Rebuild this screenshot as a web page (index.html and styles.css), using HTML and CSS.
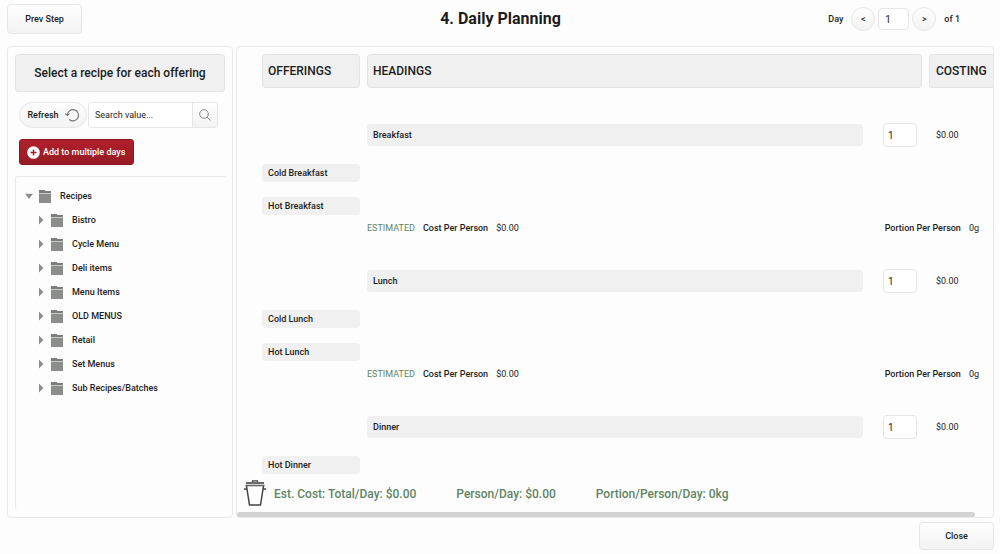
FILE: index.html
```html
<!DOCTYPE html>
<html lang="en">
<head>
  <meta charset="UTF-8">
  <title>Daily Planning</title>
  <link rel="stylesheet" href="styles.css">
</head>
<body>

<svg class="sprite" aria-hidden="true">
  <symbol id="folder" viewBox="0 0 12 13">
    <path d="M0 0h6v1h6v2H0z" fill="#7b7d7b"/>
    <path d="M0 3h12v1H0z" fill="#c9cac9"/>
    <path d="M0 4h12v9H0z" fill="#8b8d8b"/>
  </symbol>
</svg>

<header class="header">
  <div><button class="btn">Prev Step</button></div>
  <h1>4. Daily Planning</h1>
  <div class="pager">
    <label for="day">Day</label>
    <button class="round" aria-label="Previous day">&lt;</button>
    <input id="day" class="day-input" type="text" value="1">
    <button class="round" aria-label="Next day">&gt;</button>
    <span class="of">of 1</span>
  </div>
</header>

<main class="main">
  <aside class="panel sidebar">
    <h2 class="side-title">Select a recipe for each offering</h2>
    <div class="tools">
      <button class="refresh">Refresh
        <svg width="14" height="14" viewBox="0 0 14 14" fill="none" stroke="#777" stroke-width="1.2">
          <path d="M4.2 11.5A5.6 5.6 0 1 0 2.3 7"/>
          <path d="M.3 5.4l2 2 2.2-1.8"/>
        </svg>
      </button>
      <form class="search">
        <input type="text" placeholder="Search value..." aria-label="Search value">
        <button type="button" aria-label="Search">
          <svg width="12" height="12" viewBox="0 0 12 12" fill="none" stroke="#888">
            <circle cx="5" cy="5" r="4.3"/>
            <path d="M8 8l3.5 3.5"/>
          </svg>
        </button>
      </form>
    </div>
    <button class="add">
      <svg width="13" height="13" viewBox="0 0 13 13">
        <circle cx="6.5" cy="6.5" r="6.3" fill="#fff"/>
        <path d="M6.5 3.5v6M3.5 6.5h6" stroke="#a31c26" stroke-width="1.4"/>
      </svg>
      Add to multiple days
    </button>
    <div class="tree">
      <ul>
        <li><div class="node"><button class="toggle open" aria-label="Collapse"></button><svg class="folder"><use href="#folder"/></svg>Recipes</div>
          <ul>
            <li class="node"><button class="toggle" aria-label="Expand"></button><svg class="folder"><use href="#folder"/></svg>Bistro</li>
            <li class="node"><button class="toggle" aria-label="Expand"></button><svg class="folder"><use href="#folder"/></svg>Cycle Menu</li>
            <li class="node"><button class="toggle" aria-label="Expand"></button><svg class="folder"><use href="#folder"/></svg>Deli items</li>
            <li class="node"><button class="toggle" aria-label="Expand"></button><svg class="folder"><use href="#folder"/></svg>Menu Items</li>
            <li class="node"><button class="toggle" aria-label="Expand"></button><svg class="folder"><use href="#folder"/></svg>OLD MENUS</li>
            <li class="node"><button class="toggle" aria-label="Expand"></button><svg class="folder"><use href="#folder"/></svg>Retail</li>
            <li class="node"><button class="toggle" aria-label="Expand"></button><svg class="folder"><use href="#folder"/></svg>Set Menus</li>
            <li class="node"><button class="toggle" aria-label="Expand"></button><svg class="folder"><use href="#folder"/></svg>Sub Recipes/Batches</li>
          </ul>
        </li>
      </ul>
    </div>
  </aside>

  <section class="panel planner">
    <div class="plan">
      <div class="cols heads">
        <h3>OFFERINGS</h3>
        <h3>HEADINGS</h3>
        <h3 class="last">COSTING</h3>
      </div>

      <div class="meal">
        <div class="cols">
          <div class="heading">
            <label class="bar" for="breakfast">Breakfast</label>
            <input id="breakfast" type="text" value="1">
          </div>
          <span class="cost">$0.00</span>
        </div>
        <div class="offers">
          <div class="offer">Cold Breakfast</div>
          <div class="offer">Hot Breakfast</div>
        </div>
        <div class="estimate">
          <span class="green">ESTIMATED</span><b>Cost Per Person</b><span>$0.00</span>
          <b class="portion">Portion Per Person</b><span>0g</span>
        </div>
      </div>

      <div class="meal">
        <div class="cols">
          <div class="heading">
            <label class="bar" for="lunch">Lunch</label>
            <input id="lunch" type="text" value="1">
          </div>
          <span class="cost">$0.00</span>
        </div>
        <div class="offers">
          <div class="offer">Cold Lunch</div>
          <div class="offer">Hot Lunch</div>
        </div>
        <div class="estimate">
          <span class="green">ESTIMATED</span><b>Cost Per Person</b><span>$0.00</span>
          <b class="portion">Portion Per Person</b><span>0g</span>
        </div>
      </div>

      <div class="meal">
        <div class="cols">
          <div class="heading">
            <label class="bar" for="dinner">Dinner</label>
            <input id="dinner" type="text" value="1">
          </div>
          <span class="cost">$0.00</span>
        </div>
        <div class="offers">
          <div class="offer">Hot Dinner</div>
        </div>
      </div>
    </div>

    <div class="totals">
      <svg width="22" height="28" viewBox="0 0 22 28" fill="none" stroke="#444" stroke-width="1.3">
        <path d="M8.5 2V.8h5V2"/>
        <path d="M2 3h18" stroke-width="1.6"/>
        <path d="M1.5 5.5h19" stroke="#666" stroke-width="1.6"/>
        <path d="M2.5 6L5.5 25h11l3-19M0 9h3M19 9h3" stroke-width="1.5"/>
      </svg>
      <span>Est. Cost: Total/Day: $0.00</span>
      <span>Person/Day: $0.00</span>
      <span>Portion/Person/Day: 0kg</span>
    </div>
    <div class="scrollbar"></div>
  </section>
</main>

<footer class="footer">
  <button class="btn">Close</button>
</footer>

</body>
</html>
```
FILE: styles.css
```css
* {
  box-sizing: border-box;
}
body {
  margin: 0;
  padding: 0 6px 0 7px;
  height: 100vh;
  display: flex;
  flex-direction: column;
  overflow: hidden;
  background: #fdfdfd;
  color: #1c1c1c;
  font: 500 9px/14px Roboto, sans-serif;
}
h1, h2, h3, ul {
  margin: 0;
  padding: 0;
}
button, input {
  font: inherit;
  color: inherit;
  margin: 0;
}
button {
  cursor: pointer;
  padding: 0;
}
b {
  font-weight: 500;
}
svg {
  flex: none;
}
.sprite {
  display: none;
}
.btn, .round, .refresh {
  border: 1px solid #e6e6e6;
  background: linear-gradient(#fefefe, #f3f3f3);
}
.btn {
  width: 75px;
  height: 30px;
  border-radius: 4px;
}

/* top bar */
.header {
  height: 46px;
  padding: 4px 0;
  display: grid;
  grid-template-columns: 1fr auto 1fr;
}
.header h1 {
  font-size: 16px;
  line-height: 30px;
  font-weight: 700;
}
.pager {
  display: flex;
  justify-content: flex-end;
  align-items: center;
  height: 30px;
  gap: 3px;
  padding-right: 34px;
}
.pager label {
  margin-right: 5px;
}
.round {
  width: 24px;
  height: 24px;
  border-radius: 50%;
}
.day-input {
  width: 31px;
  height: 22px;
  padding: 0 6px;
}
.of {
  margin-left: 5px;
}
.day-input, .heading input {
  border: 1px solid #e6e6e6;
  border-radius: 4px;
  background: #fff;
  font-size: 10px;
  font-weight: 400;
}

/* panels */
.main {
  flex: 1;
  min-height: 0;
  display: flex;
  gap: 3px;
}
.panel {
  border: 1px solid #e9e9e9;
  border-radius: 4px;
  display: flex;
  flex-direction: column;
}
.sidebar {
  width: 226px;
  padding: 7px;
  align-items: flex-start;
}
.side-title, .heads h3 {
  border: 1px solid #e3e3e3;
  border-radius: 4px;
  background: #f0f0f0;
  font-size: 12px;
  font-weight: 500;
}
.side-title {
  width: 100%;
  line-height: 36px;
  text-align: center;
}
.tools {
  display: flex;
  gap: 1px;
  padding: 10px 4px 11px;
}
.refresh {
  width: 68px;
  height: 26px;
  border-radius: 13px;
  display: flex;
  align-items: center;
  justify-content: center;
  gap: 6px;
}
.search {
  width: 130px;
  height: 26px;
  display: flex;
  border: 1px solid #e6e6e6;
  border-radius: 3px;
  overflow: hidden;
}
.search input {
  flex: 1;
  min-width: 0;
  border: 0;
  padding: 0 6px;
  font-weight: 400;
  background: #fff;
}
.search input::placeholder {
  color: #222;
}
.search button {
  width: 25px;
  display: grid;
  place-items: center;
  border: 0;
  border-left: 1px solid #e6e6e6;
  background: linear-gradient(#fefefe, #f3f3f3);
}
.add {
  margin-left: 4px;
  height: 26px;
  padding: 0 8px 0 7px;
  display: flex;
  align-items: center;
  gap: 3px;
  color: #fff;
  border: 1px solid #8f1820;
  border-radius: 3px;
  background: linear-gradient(#b0202c, #961b24);
}
.tree {
  flex: 1;
  width: 100%;
  margin-top: 11px;
  padding: 7px 9px;
  border: 1px solid #e9e9e9;
  border-width: 1px 0 0 1px;
  border-radius: 3px 0 0 3px;
}
.tree ul {
  list-style: none;
}
.tree ul ul {
  padding-left: 12px;
}
.node {
  display: flex;
  align-items: center;
  height: 24px;
}
.toggle {
  width: 8px;
  height: 9px;
  border: 0;
  background: #8b8d8b;
  clip-path: polygon(25% 0, 80% 50%, 25% 100%);
}
.toggle.open {
  clip-path: polygon(0 25%, 100% 25%, 50% 80%);
}
.folder {
  width: 12px;
  height: 13px;
  margin: 0 9px 0 6px;
}

/* planner */
.planner {
  flex: 1;
  min-width: 0;
}
.plan {
  flex: 1;
  min-height: 0;
  padding: 7px 0 0 25px;
  overflow: hidden;
}
.cols {
  display: grid;
  grid-template-columns: 98px 1fr 64px;
  gap: 7px;
  align-items: center;
}
.heads h3 {
  padding: 0 5px;
  line-height: 32px;
}
.heads .last {
  padding-left: 6px;
  border-right: 0;
  border-radius: 4px 0 0 4px;
}
.meal {
  padding-top: 35px;
}
.meal + .meal {
  padding-top: 34px;
}
.heading {
  grid-column: 2;
  display: flex;
  align-items: center;
  gap: 20px;
  padding-right: 5px;
}
.bar {
  flex: 1;
  padding: 0 6px;
  line-height: 22px;
  border-radius: 4px;
  background: #f0f0f0;
}
.heading input {
  width: 34px;
  height: 24px;
  padding: 0 4px;
}
.cost {
  padding-left: 7px;
  font-weight: 400;
}
.offers {
  width: 98px;
  padding-top: 17px;
  display: grid;
  gap: 15px;
}
.offer {
  padding: 0 6px;
  line-height: 18px;
  border-radius: 4px;
  background: #f0f0f0;
}
.estimate {
  display: flex;
  gap: 8px;
  margin: 6px 14px 0 105px;
}
.estimate span {
  font-weight: 400;
}
.green, .totals {
  color: #5f8465;
}
.portion {
  margin-left: auto;
}
.totals {
  height: 38px;
  padding: 2px 0 0 7px;
  display: flex;
  align-items: center;
  font-size: 12px;
}
.totals span {
  margin: 0 32px 0 8px;
}
.scrollbar {
  height: 5px;
  margin-right: 18px;
  border-radius: 3px;
  background: #d3d3d3;
}

.footer {
  height: 36px;
  padding-top: 4px;
  text-align: right;
}
.footer .btn {
  height: 28px;
}
```
